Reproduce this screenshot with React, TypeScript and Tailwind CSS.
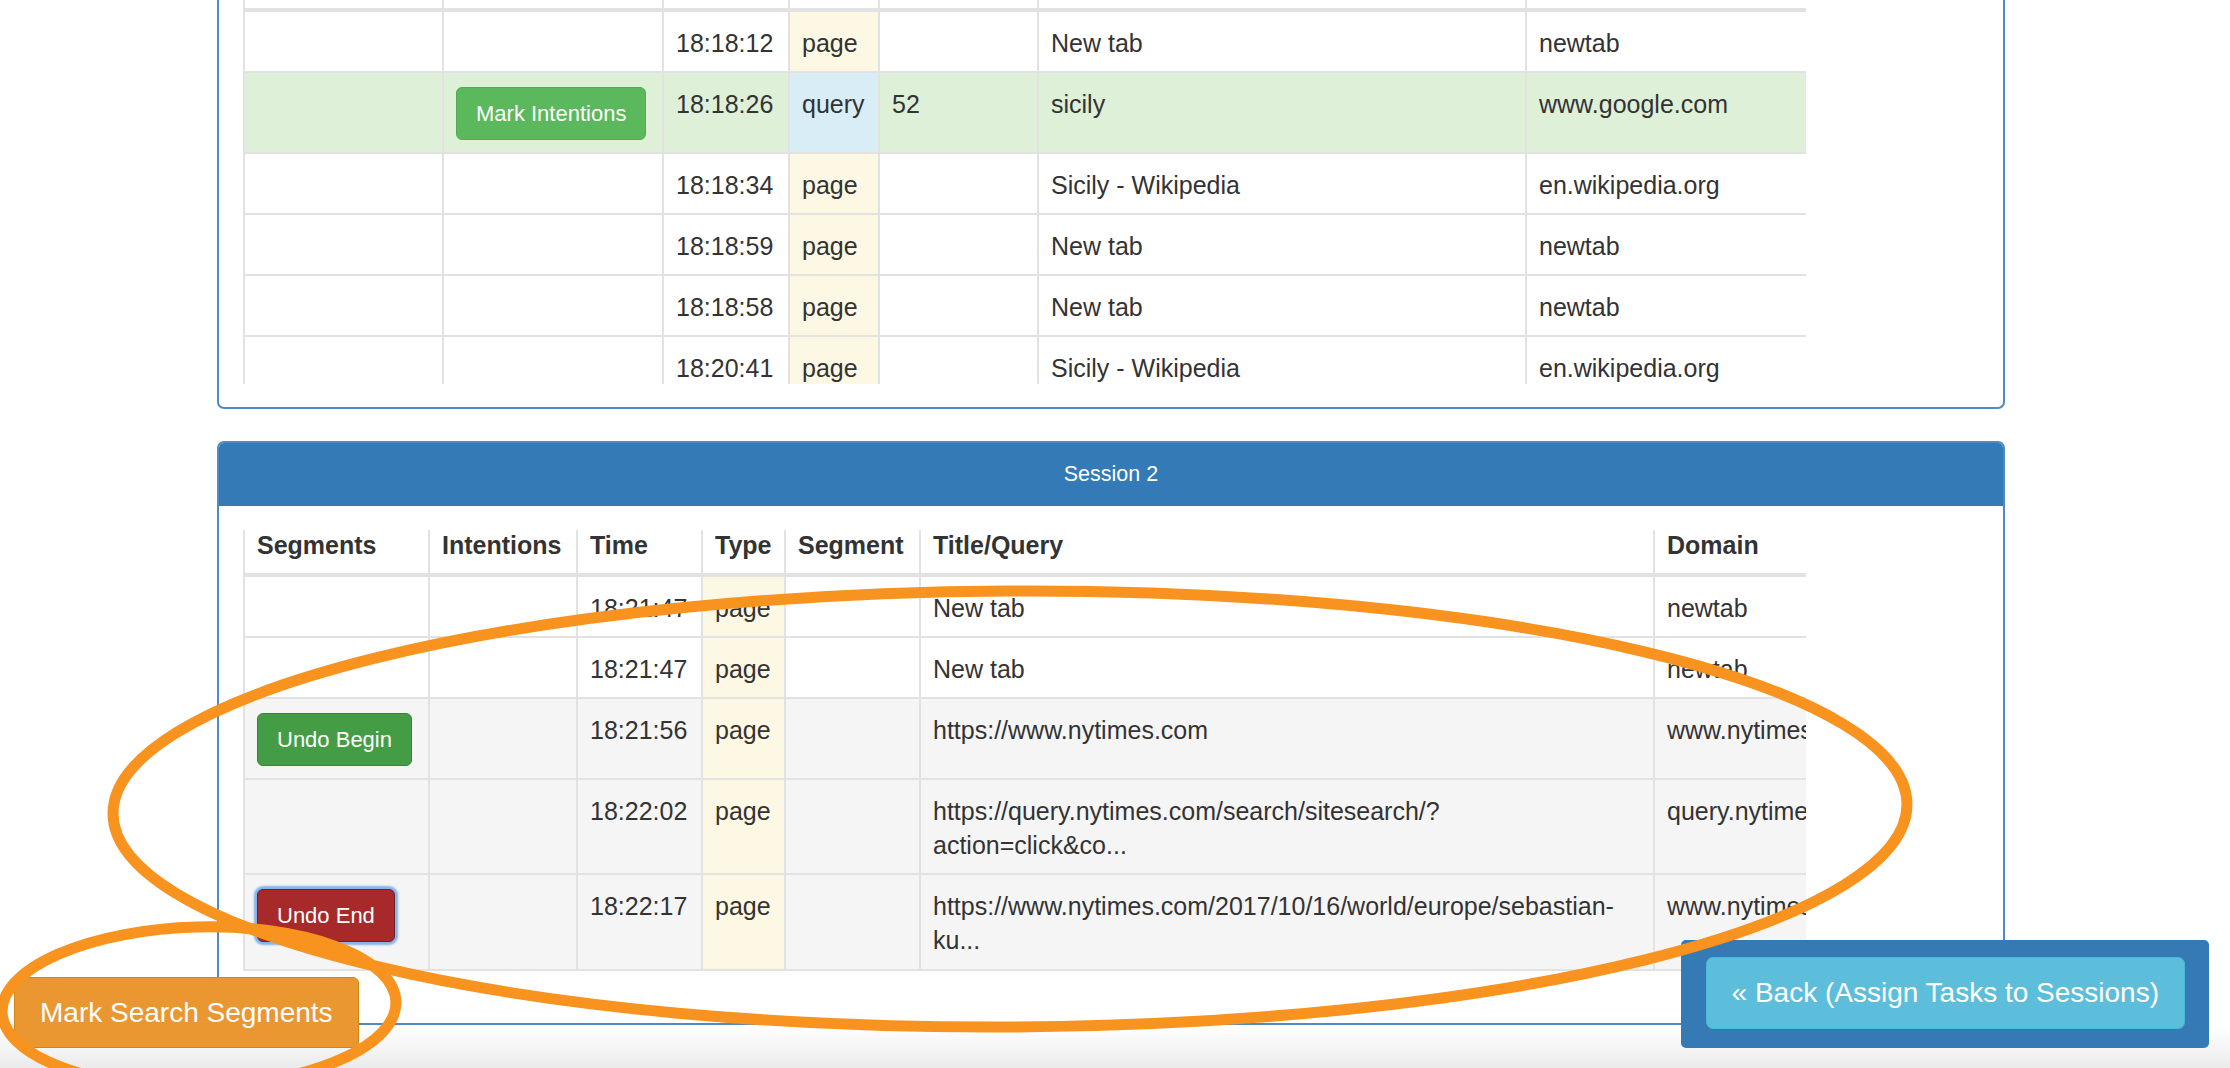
import React from "react";

/* Search-segment marking view: two session panels + fixed action buttons */

type Row = {
  seg?: "begin" | "end";
  intent?: boolean;
  time: string;
  type: "page" | "query";
  segment?: string;
  title: string[];
  domain: string;
  tone?: "green" | "gray";
};

const headers = ["Segments", "Intentions", "Time", "Type", "Segment", "Title/Query", "Domain"];

const session1: Row[] = [
  { time: "18:18:12", type: "page", title: ["New tab"], domain: "newtab" },
  {
    intent: true,
    time: "18:18:26",
    type: "query",
    segment: "52",
    title: ["sicily"],
    domain: "www.google.com",
    tone: "green",
  },
  { time: "18:18:34", type: "page", title: ["Sicily - Wikipedia"], domain: "en.wikipedia.org" },
  { time: "18:18:59", type: "page", title: ["New tab"], domain: "newtab" },
  { time: "18:18:58", type: "page", title: ["New tab"], domain: "newtab" },
  { time: "18:20:41", type: "page", title: ["Sicily - Wikipedia"], domain: "en.wikipedia.org" },
];

const session2: Row[] = [
  { time: "18:21:47", type: "page", title: ["New tab"], domain: "newtab" },
  { time: "18:21:47", type: "page", title: ["New tab"], domain: "newtab" },
  {
    seg: "begin",
    time: "18:21:56",
    type: "page",
    title: ["https://www.nytimes.com"],
    domain: "www.nytimes.com",
    tone: "gray",
  },
  {
    time: "18:22:02",
    type: "page",
    title: ["https://query.nytimes.com/search/sitesearch/?", "action=click&co..."],
    domain: "query.nytimes.com",
    tone: "gray",
  },
  {
    seg: "end",
    time: "18:22:17",
    type: "page",
    title: ["https://www.nytimes.com/2017/10/16/world/europe/sebastian-", "ku..."],
    domain: "www.nytimes.com",
    tone: "gray",
  },
];

const cellBase = "border-2 border-[#e2e2e2] px-3 pt-[14px] align-top whitespace-nowrap";

function SessionTable({
  rows,
  cols,
  tableClass,
}: {
  rows: Row[];
  cols: string[];
  tableClass: string;
}) {
  return (
    <table className={`table-fixed border-collapse text-left text-[25px] leading-[34px] ${tableClass}`}>
      <colgroup>
        {cols.map((c, i) => (
          <col key={i} className={c} />
        ))}
      </colgroup>
      <thead>
        <tr>
          {headers.map((h) => (
            <th
              key={h}
              className="border-2 border-b-4 border-[#e2e2e2] px-3 pt-[14px] pb-[11px] text-left align-top font-bold whitespace-nowrap"
            >
              {h}
            </th>
          ))}
        </tr>
      </thead>
      <tbody>
        {rows.map((r, i) => {
          const pb = r.seg || r.intent ? "pb-[12px]" : "pb-[11px]";
          const cell = `${cellBase} ${pb}`;
          const rowBg =
            r.tone === "green" ? "bg-[#dff0d8]" : r.tone === "gray" ? "bg-[#f5f5f5]" : "bg-white";
          return (
            <tr key={i} className={rowBg}>
              <td className={cell}>
                {r.seg === "begin" && (
                  <button className="block rounded-[6px] border border-[#398439] bg-[#449d44] px-[19px] py-[9px] text-[22px] leading-[33px] text-white">
                    Undo Begin
                  </button>
                )}
                {r.seg === "end" && (
                  <button className="block rounded-[6px] border border-[#6f2130] bg-[#a8292a] px-[19px] py-[9px] text-[22px] leading-[33px] text-white shadow-[0_0_2px_3px_rgba(110,168,235,0.85)]">
                    Undo End
                  </button>
                )}
              </td>
              <td className={cell}>
                {r.intent && (
                  <button className="block rounded-[6px] border border-[#4cae4c] bg-[#5cb85c] px-[19px] py-[9px] text-[22px] leading-[33px] text-white">
                    Mark Intentions
                  </button>
                )}
              </td>
              <td className={cell}>{r.time}</td>
              <td className={`${cell} ${r.type === "query" ? "bg-[#d9edf7]" : "bg-[#fcf8e3]"}`}>{r.type}</td>
              <td className={cell}>{r.segment}</td>
              <td className={cell}>
                {r.title.map((line, j) => (
                  <div key={j}>{line}</div>
                ))}
              </td>
              <td className={cell}>{r.domain}</td>
            </tr>
          );
        })}
      </tbody>
    </table>
  );
}

export default function App() {
  return (
    <div className="relative h-[1068px] w-full overflow-hidden bg-white font-['Liberation_Sans',Arial,sans-serif] text-[#333333]">
      <div className="pl-[217px]">
        {/* ---- Session 1 (scrolled, top cut off) ---- */}
        <section className="w-[1788px] rounded-b-[7px] border-x-2 border-b-2 border-[#4f8bc2] px-6 pb-[23px]">
          <div className="h-[384px] w-[1563px] overflow-hidden">
            <SessionTable
              rows={session1}
              cols={["w-[199px]", "w-[220px]", "w-[126px]", "w-[90px]", "w-[159px]", "w-[488px]", "w-[300px]"]}
              tableClass="-mt-[53px] w-[1582px]"
            />
          </div>
        </section>

        {/* ---- Session 2 ---- */}
        <section className="mt-[32px] w-[1788px] overflow-hidden rounded-[7px] border-2 border-[#4f8bc2]">
          <div className="flex h-[63px] items-center justify-center bg-[#337ab7] text-[21.5px] text-white">
            Session 2
          </div>
          <div className="px-6 pt-6 pb-[23px]">
            <div className="h-[470px] w-[1563px] overflow-hidden">
              <SessionTable
                rows={session2}
                cols={["w-[185px]", "w-[148px]", "w-[125px]", "w-[83px]", "w-[135px]", "w-[734px]", "w-[260px]"]}
                tableClass="-mt-[18px] w-[1670px]"
              />
            </div>
          </div>
        </section>
      </div>

      {/* bottom fade */}
      <div className="absolute inset-x-0 bottom-0 h-[42px] bg-[linear-gradient(to_bottom,#ffffff,#ebebeb)]" />

      {/* fixed actions */}
      <button className="absolute bottom-[20px] left-[14px] flex h-[71px] items-center rounded-[6px] border border-[#d58512] bg-[#ea9732] px-[25px] text-[28px] leading-none text-white">
        Mark Search Segments
      </button>

      <div className="absolute right-[21px] bottom-[20px] rounded-[5px] bg-[#367ab5] pt-[17px] pr-[24px] pb-[19px] pl-[25px]">
        <button className="flex h-[72px] items-center rounded-[7px] border border-[#46b8da] bg-[#5dbedb] px-[25px] text-[28px] leading-none text-white">
          « Back (Assign Tasks to Sessions)
        </button>
      </div>

      {/* hand-drawn annotation circles */}
      <svg
        className="pointer-events-none absolute top-0 left-0"
        width="2230"
        height="1068"
        viewBox="0 0 2230 1068"
      >
        <ellipse
          cx="1010"
          cy="809"
          rx="897"
          ry="218"
          transform="rotate(-0.3 1010 809)"
          fill="none"
          stroke="#f7931e"
          strokeWidth="11"
        />
        <ellipse
          cx="199"
          cy="1007"
          rx="197"
          ry="80"
          transform="rotate(-1.5 199 1007)"
          fill="none"
          stroke="#f7931e"
          strokeWidth="11"
        />
      </svg>
    </div>
  );
}
